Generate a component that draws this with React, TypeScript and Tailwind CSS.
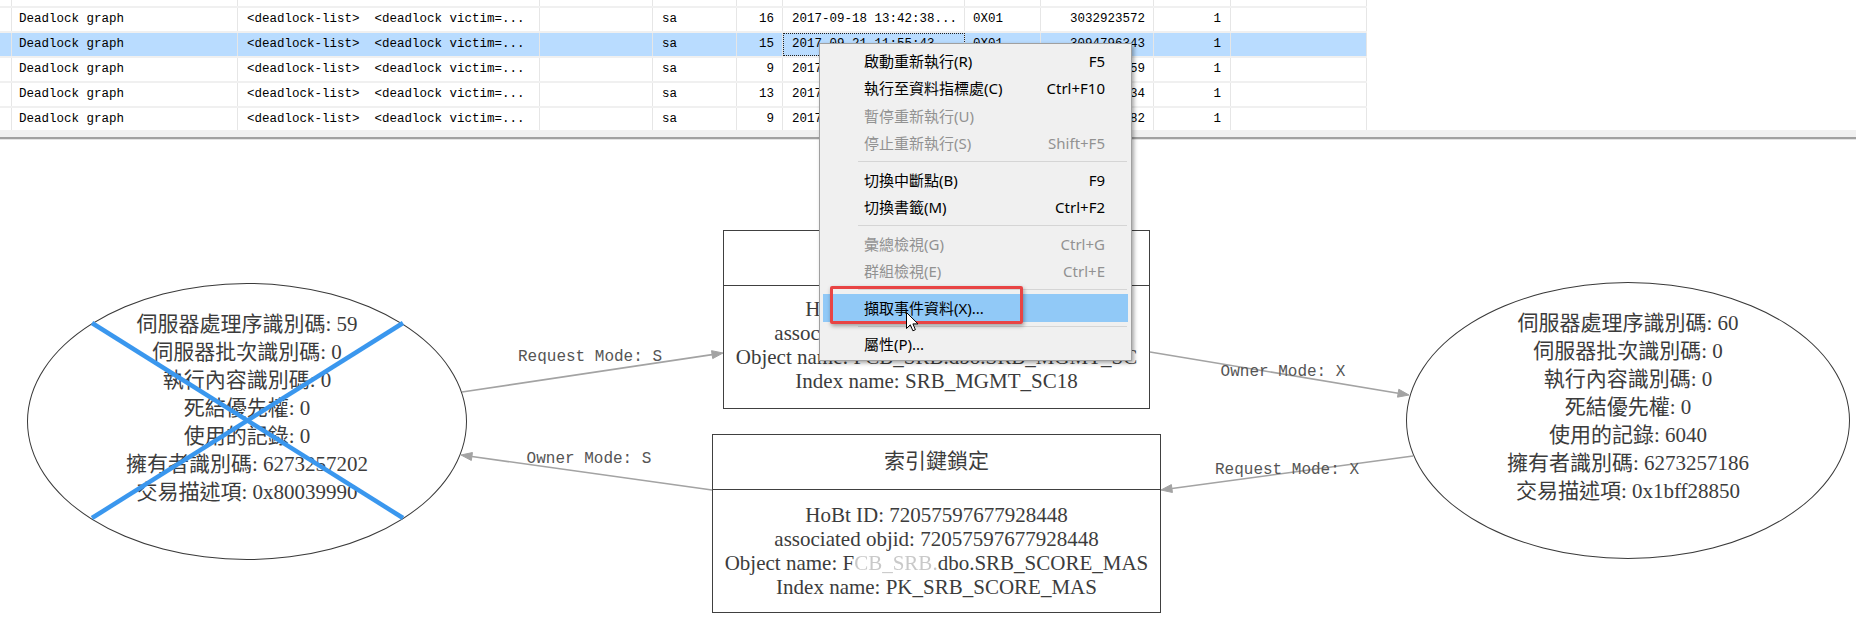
import React from 'react'

type Row = { cells: string[]; selected?: boolean }

// column widths and padding, left to right
const colCls = [
  'w-[12px]',
  'w-[226px] pl-[7px]',
  'w-[302px] pl-[9px]',
  'w-[113px]',
  'w-[84px] pl-[9px]',
  'w-[46px] pr-[8px] justify-end',
  'w-[182px] pl-[9px]',
  'w-[76px] pl-[8px]',
  'w-[113px] pr-[8px] justify-end',
  'w-[77px] pr-[9px] justify-end',
  'w-[136px]',
]

const xml = '<deadlock-list>  <deadlock victim=...'

const rows: Row[] = [
  { cells: ['', 'Deadlock graph', xml, '', 'sa', '11', '2017-09-18 10:27:05...', '0X01', '3029461748', '1', ''] },
  { cells: ['', 'Deadlock graph', xml, '', 'sa', '16', '2017-09-18 13:42:38...', '0X01', '3032923572', '1', ''] },
  { cells: ['', 'Deadlock graph', xml, '', 'sa', '15', '2017-09-21 11:55:43...', '0X01', '3094796343', '1', ''], selected: true },
  { cells: ['', 'Deadlock graph', xml, '', 'sa', '9', '2017-09-21 14:08:16...', '0X01', '3097315659', '1', ''] },
  { cells: ['', 'Deadlock graph', xml, '', 'sa', '13', '2017-09-22 09:31:52...', '0X01', '3101842734', '1', ''] },
  { cells: ['', 'Deadlock graph', xml, '', 'sa', '9', '2017-09-25 16:20:07...', '0X01', '3110573482', '1', ''] },
]

type MenuItem = { label: string; keys?: string; disabled?: boolean; active?: boolean } | 'sep'

const menu: MenuItem[] = [
  { label: '啟動重新執行(R)', keys: 'F5' },
  { label: '執行至資料指標處(C)', keys: 'Ctrl+F10' },
  { label: '暫停重新執行(U)', disabled: true },
  { label: '停止重新執行(S)', keys: 'Shift+F5', disabled: true },
  'sep',
  { label: '切換中斷點(B)', keys: 'F9' },
  { label: '切換書籤(M)', keys: 'Ctrl+F2' },
  'sep',
  { label: '彙總檢視(G)', keys: 'Ctrl+G', disabled: true },
  { label: '群組檢視(E)', keys: 'Ctrl+E', disabled: true },
  'sep',
  { label: '擷取事件資料(X)...', active: true },
  'sep',
  { label: '屬性(P)...' },
]

const leftProc = [
  '伺服器處理序識別碼: 59',
  '伺服器批次識別碼: 0',
  '執行內容識別碼: 0',
  '死結優先權: 0',
  '使用的記錄: 0',
  '擁有者識別碼: 6273257202',
  '交易描述項: 0x80039990',
]

const rightProc = [
  '伺服器處理序識別碼: 60',
  '伺服器批次識別碼: 0',
  '執行內容識別碼: 0',
  '死結優先權: 0',
  '使用的記錄: 6040',
  '擁有者識別碼: 6273257186',
  '交易描述項: 0x1bff28850',
]

// edges in diagram coordinates: start -> arrow tip
const edges = [
  { x1: 462, y1: 252, x2: 723, y2: 213 },
  { x1: 712, y1: 350, x2: 461, y2: 315 },
  { x1: 1150, y1: 212, x2: 1409, y2: 255 },
  { x1: 1413, y1: 316, x2: 1161, y2: 350 },
]

function arrow(e: { x1: number; y1: number; x2: number; y2: number }) {
  const dx = e.x2 - e.x1
  const dy = e.y2 - e.y1
  const len = Math.hypot(dx, dy)
  const ux = dx / len
  const uy = dy / len
  const bx = e.x2 - ux * 11
  const by = e.y2 - uy * 11
  const px = -uy * 4
  const py = ux * 4
  return {
    bx,
    by,
    points: `${e.x2},${e.y2} ${bx + px},${by + py} ${bx - px},${by - py}`,
  }
}

function ProcessNode({ lines, className }: { lines: string[]; className: string }) {
  return (
    <div className={`absolute h-[277px] rounded-[50%] border border-[#3a3a3a] flex flex-col items-center pt-[26px] ${className}`}>
      {lines.map((l, i) => (
        <div key={i} className="leading-[28px] whitespace-nowrap">{l}</div>
      ))}
    </div>
  )
}

function KeyLockNode({ className, lines, pt }: { className: string; lines: React.ReactNode[]; pt: string }) {
  return (
    <div className={`absolute h-[179px] border-[1.5px] border-[#404040] bg-white flex flex-col ${className}`}>
      <div className="h-[55px] shrink-0 border-b-[1.5px] border-[#404040] flex items-center justify-center">索引鍵鎖定</div>
      <div className={`flex flex-col items-center leading-[24px] ${pt}`}>
        {lines.map((l, i) => (
          <div key={i} className="whitespace-nowrap">{l}</div>
        ))}
      </div>
    </div>
  )
}

export default function App() {
  return (
    <div className="relative w-[1856px] h-[617px] overflow-hidden bg-white">
      {/* trace grid */}
      <div className="h-[130px] overflow-hidden font-['Liberation_Mono',monospace] text-[12.5px] text-black">
        <div className="-mt-[17px]">
          {rows.map((r, ri) => (
            <div key={ri} className={`flex h-[25px] w-[1367px] border-b-2 border-[#f0f0f0] ${r.selected ? 'bg-[#b9dcff]' : ''}`}>
              {r.cells.map((c, ci) => (
                <div
                  key={ci}
                  className={`flex items-center h-full shrink-0 overflow-hidden whitespace-pre border-r border-[#e6e6e6] ${colCls[ci]} ${r.selected && ci === 6 ? 'outline-1 outline-dotted outline-[#222] -outline-offset-1' : ''}`}
                >
                  {c}
                </div>
              ))}
            </div>
          ))}
        </div>
      </div>
      <div className="h-[7px] bg-[#f0f0f0]" />
      <div className="h-[2px] bg-[#a0a0a0]" />
      <div className="h-[1px] bg-[#e3e3e3]" />

      {/* deadlock graph */}
      <div className="relative h-[477px] font-['Liberation_Serif','Noto_Sans_CJK_TC',serif] text-[21px] text-[#3c3c3c]">
        <ProcessNode lines={leftProc} className="left-[27px] top-[143px] w-[440px]" />
        <ProcessNode lines={rightProc} className="left-[1406px] top-[142px] w-[444px]" />

        <KeyLockNode
          className="left-[723px] top-[90px] w-[427px]"
          pt="pt-[11px]"
          lines={[
            'HoBt ID: 72057597677862912',
            'associated objid: 72057597677862912',
            'Object name: FCB_SRB.dbo.SRB_MGMT_SC',
            'Index name: SRB_MGMT_SC18',
          ]}
        />
        <KeyLockNode
          className="left-[712px] top-[294px] w-[449px]"
          pt="pt-[13px]"
          lines={[
            'HoBt ID: 72057597677928448',
            'associated objid: 72057597677928448',
            <>
              Object name: F<span className="text-[#c9c9c9] blur-[0.7px]">CB_SRB.</span>dbo.SRB_SCORE_MAS
            </>,
            'Index name: PK_SRB_SCORE_MAS',
          ]}
        />

        <svg className="absolute inset-0 pointer-events-none" width="1856" height="477">
          {edges.map((e, i) => {
            const a = arrow(e)
            return (
              <g key={i}>
                <line x1={e.x1} y1={e.y1} x2={a.bx} y2={a.by} stroke="#a3a3a3" strokeWidth="1.6" />
                <polygon points={a.points} fill="#a3a3a3" stroke="#a3a3a3" strokeWidth="1" />
              </g>
            )
          })}
          {/* victim mark */}
          <line x1="92" y1="183" x2="403" y2="378" stroke="#3a97ee" strokeWidth="4.5" />
          <line x1="92" y1="378" x2="403" y2="183" stroke="#3a97ee" strokeWidth="4.5" />
        </svg>

        <div className="absolute left-[590px] top-[217px] -translate-x-1/2 -translate-y-1/2 whitespace-pre font-['Liberation_Mono',monospace] text-[16px] text-[#555]">Request Mode: S</div>
        <div className="absolute left-[589px] top-[319px] -translate-x-1/2 -translate-y-1/2 whitespace-pre font-['Liberation_Mono',monospace] text-[16px] text-[#555]">Owner Mode: S</div>
        <div className="absolute left-[1283px] top-[232px] -translate-x-1/2 -translate-y-1/2 whitespace-pre font-['Liberation_Mono',monospace] text-[16px] text-[#555]">Owner Mode: X</div>
        <div className="absolute left-[1287px] top-[330px] -translate-x-1/2 -translate-y-1/2 whitespace-pre font-['Liberation_Mono',monospace] text-[16px] text-[#555]">Request Mode: X</div>
      </div>

      {/* context menu */}
      <div className="absolute left-[819px] top-[43px] w-[313px] border border-[#a0a0a0] bg-[#f0f0f0] p-[3px] pb-[2px] shadow-[2px_2px_4px_rgba(0,0,0,0.35)] font-['Noto_Sans','Noto_Sans_CJK_TC',sans-serif] text-[15px]">
        {menu.map((m, i) =>
          m === 'sep' ? (
            <div key={i} className="h-[9px] flex items-center pl-[35px] pr-[1px]">
              <div className="h-px w-full bg-[#d5d5d5]" />
            </div>
          ) : (
            <div
              key={i}
              className={`h-[27.5px] flex items-center justify-between pl-[41px] pr-[23px] whitespace-nowrap ${m.active ? 'bg-[#91c9f7]' : ''} ${m.disabled ? 'text-[#929292]' : 'text-black'}`}
            >
              <span>{m.label}</span>
              <span>{m.keys}</span>
            </div>
          ),
        )}
      </div>

      {/* red highlight annotation */}
      <div className="absolute left-[830px] top-[286px] w-[193px] h-[38px] border-[3px] border-[#e84444] rounded-[2px] shadow-[1px_2px_4px_rgba(0,0,0,0.35)]" />

      {/* mouse pointer */}
      <svg className="absolute left-[906px] top-[312px]" width="13" height="20" viewBox="0 0 13 20">
        <path d="M0.5 0.5 L0.5 16.5 L4.3 12.8 L6.9 18.8 L9.4 17.7 L6.9 11.9 L12 11.9 Z" fill="#fff" stroke="#000" strokeWidth="1" strokeLinejoin="round" />
      </svg>
    </div>
  )
}
